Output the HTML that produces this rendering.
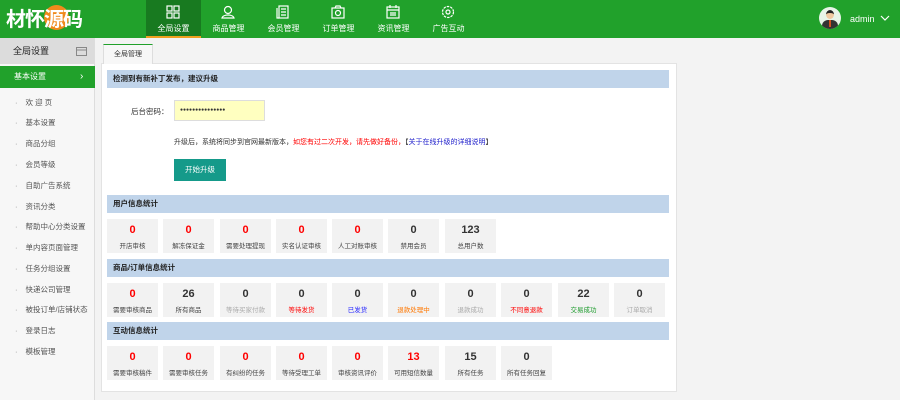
<!DOCTYPE html>
<html><head><meta charset="utf-8"><style>
*{margin:0;padding:0;box-sizing:border-box}
body{width:900px;height:400px;overflow:hidden;background:#f3f3f3;font-family:"Liberation Sans","Noto Sans CJK SC",sans-serif;font-size:8px;color:#333;position:relative}
.hd{position:absolute;left:0;top:0;width:900px;height:38px;background:#21a12b}
.logo{position:absolute;left:6px;top:5px;font-size:20px;font-weight:bold;color:#fff;letter-spacing:-1px;font-family:"Noto Sans CJK SC",sans-serif;line-height:26px}
.logo .c{position:absolute;left:38px;top:0px;width:25px;height:25px;border-radius:50%;background:#f08a1c}
.logo span{position:relative}
.nav{position:absolute;top:0;height:38px;width:55px;color:#fff;text-align:center}
.nav.act{background:#187a20;border-bottom:2px solid #f0a020}
.nav svg{position:absolute;left:20px;top:5px}
.nav span{position:absolute;left:0;right:0;top:23px;font-size:8px}
.side{position:absolute;left:0;top:38px;width:95px;height:362px;background:#f7f7f7;border-right:1px solid #ddd}
.sh{height:26px;background:#dcdcdc;font-size:9px;line-height:26px;padding-left:13px;color:#222}
.sa{position:absolute;left:0;top:28px;width:95px;height:22px;background:#21a12b;color:#fff;font-size:8px;line-height:22px;padding-left:14px}
.si{position:absolute;left:15px;font-size:7.5px;color:#555}
.si:before{content:"·";margin-right:8px;color:#888}
.tab{position:absolute;left:103px;top:44px;width:50px;height:20px;background:#f7f7f7;border:1px solid #ddd;border-top:1px solid #21a12b;border-bottom:none;font-size:7px;text-align:center;line-height:19px}
.panel{position:absolute;left:101px;top:63px;width:576px;height:329px;background:#fff;border:1px solid #e3e3e3}
.bar{position:absolute;left:107px;width:562px;height:18px;background:#c0d4ea;font-size:7.5px;font-weight:bold;line-height:18px;padding-left:6px;color:#222}
.box{position:absolute;width:51px;height:34px;background:#f2f2f2;text-align:center}
.box b{display:block;font-size:11px;margin-top:5px;line-height:13px}
.box i{display:block;font-style:normal;font-size:6.5px;margin-top:3px;color:#444}
.box .r,.r{color:#f00}
.box .g{color:#aaa}
</style></head><body>
<div class="hd">
<div class="logo"><div class="c"></div><span>材怀源码</span></div>
<div class="nav act" style="left:146px"><svg width="14" height="14" fill="none" stroke="#fff" stroke-width="1.2"><rect x="1" y="1" width="5" height="5"/><rect x="8" y="1" width="5" height="5"/><rect x="1" y="8" width="5" height="5"/><rect x="8" y="8" width="5" height="5"/></svg><span>全局设置</span></div>
<div class="nav" style="left:201px"><svg width="14" height="14" fill="none" stroke="#fff" stroke-width="1.2"><circle cx="7" cy="5" r="3.5"/><path d="M1 13c1-4 11-4 12 0z"/></svg><span>商品管理</span></div>
<div class="nav" style="left:256px"><svg width="14" height="14" fill="none" stroke="#fff" stroke-width="1.2"><rect x="3" y="1" width="9" height="12"/><path d="M1 3v10h2M5 4h5M5 7h5M5 10h5"/></svg><span>会员管理</span></div>
<div class="nav" style="left:311px"><svg width="14" height="14" fill="none" stroke="#fff" stroke-width="1.2"><rect x="1" y="3" width="12" height="10"/><circle cx="7" cy="8" r="2.5"/><path d="M4 3l1-2h4l1 2"/></svg><span>订单管理</span></div>
<div class="nav" style="left:366px"><svg width="14" height="14" fill="none" stroke="#fff" stroke-width="1.2"><rect x="1" y="2" width="12" height="11"/><path d="M1 5h12M4 0v3M10 0v3M4 8h6M4 10h6"/></svg><span>资讯管理</span></div>
<div class="nav" style="left:421px"><svg width="14" height="14" fill="none" stroke="#fff" stroke-width="1.2"><circle cx="7" cy="7" r="2"/><circle cx="7" cy="7" r="5.5" stroke-dasharray="2.5 1"/></svg><span>广告互动</span></div>
<div style="position:absolute;left:819px;top:7px;width:22px;height:22px;border-radius:50%;background:#e8f4e8;overflow:hidden"><div style="position:absolute;left:7px;top:3px;width:8px;height:9px;border-radius:50%;background:#f0c8a0;border-top:3px solid #222"></div><div style="position:absolute;left:3px;top:13px;width:16px;height:10px;border-radius:6px 6px 0 0;background:#333"></div><div style="position:absolute;left:10px;top:13px;width:2px;height:7px;background:#d05020"></div></div>
<div style="position:absolute;left:850px;top:14px;color:#fff;font-size:9px">admin</div>
<svg style="position:absolute;left:880px;top:15px" width="10" height="7" fill="none" stroke="#fff" stroke-width="1.2"><path d="M1 1l4 4 4-4"/></svg>
</div>
<div class="side">
<div class="sh">全局设置<svg style="position:absolute;left:76px;top:8px" width="11" height="10" fill="none" stroke="#888"><rect x="0.5" y="1.5" width="10" height="8"/><path d="M0.5 4h10"/></svg></div>
<div class="sa">基本设置<span style="position:absolute;left:80px;font-size:10px">›</span></div>
<div class="si" style="top:59px">欢 迎 页</div>
<div class="si" style="top:79px">基本设置</div>
<div class="si" style="top:100px">商品分组</div>
<div class="si" style="top:121px">会员等级</div>
<div class="si" style="top:142px">自助广告系统</div>
<div class="si" style="top:163px">资讯分类</div>
<div class="si" style="top:183px">帮助中心分类设置</div>
<div class="si" style="top:204px">单内容页面管理</div>
<div class="si" style="top:225px">任务分组设置</div>
<div class="si" style="top:246px">快递公司管理</div>
<div class="si" style="top:266px">被投订单/店铺状态</div>
<div class="si" style="top:287px">登录日志</div>
<div class="si" style="top:308px">模板管理</div>
</div>
<div class="panel"></div>
<div class="tab">全局管理</div>
<div class="bar" style="top:70px">检测到有新补丁发布，建议升级</div>
<div style="position:absolute;left:131px;top:106px;font-size:7.5px">后台密码：</div>
<div style="position:absolute;left:174px;top:100px;width:91px;height:21px;background:#ffffc0;border:1px solid #ddd;font-size:5px;line-height:19px;padding-left:5px;letter-spacing:0px">●●●●●●●●●●●●●●●</div>
<div style="position:absolute;left:174px;top:137px;font-size:7px">升级后，系统将同步到官网最新版本，<span class="r">如您有过二次开发，请先做好备份，</span>【<span style="color:#22c">关于在线升级的详细说明</span>】</div>
<div style="position:absolute;left:174px;top:159px;width:52px;height:22px;background:#159a8a;color:#fff;font-size:7.5px;text-align:center;line-height:22px">开始升级</div>
<div class="bar" style="top:195px">用户信息统计</div>
<div class="box" style="left:107px;top:219px"><b class="r">0</b><i>开店审核</i></div>
<div class="box" style="left:163px;top:219px"><b class="r">0</b><i>解冻保证金</i></div>
<div class="box" style="left:220px;top:219px"><b class="r">0</b><i>需要处理提现</i></div>
<div class="box" style="left:276px;top:219px"><b class="r">0</b><i>实名认证审核</i></div>
<div class="box" style="left:332px;top:219px"><b class="r">0</b><i>人工对账审核</i></div>
<div class="box" style="left:388px;top:219px"><b>0</b><i>禁用会员</i></div>
<div class="box" style="left:445px;top:219px"><b>123</b><i>总用户数</i></div>
<div class="bar" style="top:259px">商品/订单信息统计</div>
<div class="box" style="left:107px;top:283px"><b class="r">0</b><i>需要审核商品</i></div>
<div class="box" style="left:163px;top:283px"><b>26</b><i>所有商品</i></div>
<div class="box" style="left:220px;top:283px"><b>0</b><i class="g">等待买家付款</i></div>
<div class="box" style="left:276px;top:283px"><b>0</b><i class="r">等待发货</i></div>
<div class="box" style="left:332px;top:283px"><b>0</b><i style="color:#22f">已发货</i></div>
<div class="box" style="left:388px;top:283px"><b>0</b><i style="color:#f70">退款处理中</i></div>
<div class="box" style="left:445px;top:283px"><b>0</b><i class="g">退款成功</i></div>
<div class="box" style="left:501px;top:283px"><b>0</b><i class="r">不同意退款</i></div>
<div class="box" style="left:558px;top:283px"><b>22</b><i style="color:#1a9a2a">交易成功</i></div>
<div class="box" style="left:614px;top:283px"><b>0</b><i class="g">订单取消</i></div>
<div class="bar" style="top:322px">互动信息统计</div>
<div class="box" style="left:107px;top:346px"><b class="r">0</b><i>需要审核稿件</i></div>
<div class="box" style="left:163px;top:346px"><b class="r">0</b><i>需要审核任务</i></div>
<div class="box" style="left:220px;top:346px"><b class="r">0</b><i>有纠纷的任务</i></div>
<div class="box" style="left:276px;top:346px"><b class="r">0</b><i>等待受理工单</i></div>
<div class="box" style="left:332px;top:346px"><b class="r">0</b><i>审核资讯评价</i></div>
<div class="box" style="left:388px;top:346px"><b class="r">13</b><i>可用短信数量</i></div>
<div class="box" style="left:445px;top:346px"><b>15</b><i>所有任务</i></div>
<div class="box" style="left:501px;top:346px"><b>0</b><i>所有任务回复</i></div>
</body></html>
